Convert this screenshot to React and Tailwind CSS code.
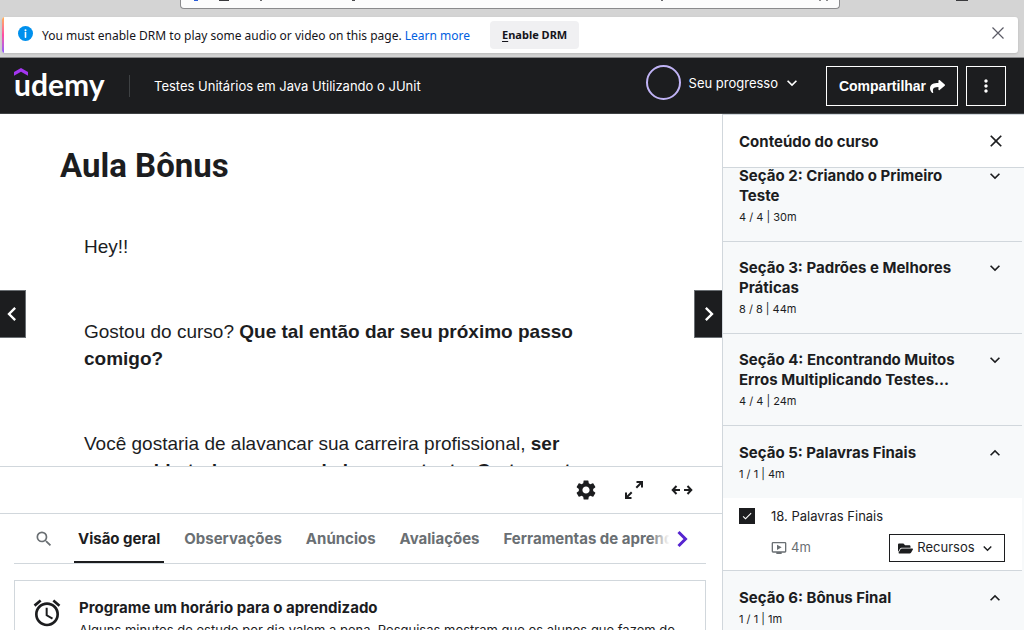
import {
  MdAccessAlarm,
  MdCheck,
  MdChevronLeft,
  MdChevronRight,
  MdClose,
  MdExpandLess,
  MdExpandMore,
  MdMoreVert,
  MdOndemandVideo,
  MdSearch,
  MdSettings,
} from 'react-icons/md';
import { FaFolderOpen, FaShare } from 'react-icons/fa';

const tabs = ['Visão geral', 'Observações', 'Anúncios', 'Avaliações', 'Ferramentas de aprendizado'];

function BrowserChrome() {
  return (
    <div className="bg-[#d4d4d4] pr-[6px] pb-[4px] pl-[2px] font-['Noto_Sans',sans-serif]">
      <div className="flex h-[17px] items-start pl-[178px]">
        <div className="h-[9px] w-[660px] rounded-b-[4px] border border-t-0 border-[#8a8a8c] bg-[#fcfcfc]">
          <svg className="block" width="658" height="2" aria-hidden="true">
            <rect x="13" width="4" height="1" fill="#2a5bd7" />
            <rect x="38" width="10" height="1" fill="#3a3a3d" />
            <rect x="79" width="2" height="1" fill="#6b6b6e" />
            <rect x="171" width="3" height="1" fill="#4a4a4d" />
            <rect x="480" width="2" height="1" fill="#6b6b6e" />
            <rect x="638" width="2" height="1" fill="#8a8a8c" />
            <rect x="645" width="2" height="1" fill="#8a8a8c" />
          </svg>
        </div>
        <span className="ml-[116px] h-px w-3 bg-[#3a3a3d]" />
      </div>
      <div className="flex h-9 items-center overflow-hidden rounded-[3px] bg-white shadow-sm">
        <span className="h-full w-[2px] bg-linear-to-b from-[#ffb04f] via-[#ff4aa2] to-[#9059ff]" />
        <svg className="mb-1 ml-[14px]" width="15" height="15" viewBox="0 0 15 15" aria-hidden="true">
          <circle cx="7.500" cy="7.500" r="7.500" fill="#0090ed" />
          <circle cx="7.500" cy="4.200" r="1" fill="#fff" />
          <path d="M7.500 6.600v4.600" stroke="#fff" strokeWidth="1.600" strokeLinecap="round" />
        </svg>
        <p className="ml-[9px] pt-[2px] text-[12px] text-[#15141a]">
          You must enable DRM to play some audio or video on this page.{' '}
          <a href="#drm" className="text-[#0060df]">Learn more</a>
        </p>
        <button className="ml-5 h-7 rounded-[4px] bg-[#f0f0f2] px-3 text-[11px] font-bold text-[#15141a]">
          <span className="underline underline-offset-2">E</span>nable DRM
        </button>
        <button aria-label="Fechar aviso" className="mr-[14px] mb-1 ml-auto">
          <svg width="12" height="12" viewBox="0 0 12 12" stroke="#5b5b66" strokeWidth="1.200">
            <path d="M.5.5l11 11M11.500.5l-11 11" />
          </svg>
        </button>
      </div>
    </div>
  );
}

function Logo() {
  return (
    <a href="#inicio" className="relative mb-1 block w-[91px] font-['Lato',sans-serif] text-[30px] leading-[40px] font-bold text-white">
      udemy
      <svg className="absolute top-1 left-0" width="14" height="8" viewBox="0 0 14 8" fill="#a435f0" aria-hidden="true">
        <path d="M7 0l7 4v3.700L7 3.700 0 7.700V4z" />
      </svg>
    </a>
  );
}

function Header() {
  return (
    <header className="flex h-[57px] shrink-0 items-center border-t border-b border-t-[#8a8a8c] border-b-[#3e4143] bg-[#1c1d1f] pr-[18px] pl-[14px] text-white">
      <Logo />
      <span className="ml-6 h-[22px] w-px bg-[#3e4143]" />
      <a href="#curso" className="ml-6 pt-[2px] text-[13px]">Testes Unitários em Java Utilizando o JUnit</a>
      <button className="mb-[6px] ml-auto flex items-center text-[13px]">
        <span className="size-[35px] rounded-full border-2 border-[#c0b3f5]" />
        <span className="ml-2 pt-[2px]">Seu progresso</span>
        <MdExpandMore className="ml-1" size={20} />
      </button>
      <button className="ml-6 flex h-10 w-[132px] items-center justify-center gap-1 border border-white pt-[2px] font-['Liberation_Sans',sans-serif] text-[14px] font-bold">
        Compartilhar <FaShare size={15} />
      </button>
      <button aria-label="Mais opções" className="ml-2 flex size-10 items-center justify-center border border-white">
        <MdMoreVert size={20} />
      </button>
    </header>
  );
}

function Lesson() {
  return (
    <div className="relative min-h-0 flex-1">
      <article className="h-full overflow-hidden pt-8 pl-[60px]">
        <h1 className="font-['Roboto',sans-serif] text-[33px] leading-10 font-bold">Aula Bônus</h1>
        <div className="mt-[47px] ml-6 flex max-w-[530px] flex-col gap-[58px] font-['Liberation_Sans',sans-serif] text-[19px] leading-[27px]">
          <p>Hey!!</p>
          <p>Gostou do curso? <strong>Que tal então dar seu próximo passo comigo?</strong></p>
          <p>
            Você gostaria de alavancar sua carreira profissional,{' '}
            <strong>ser promovido todo ano, e mais bem contente. Certamente</strong>
          </p>
        </div>
      </article>
      <button aria-label="Aula anterior" className="absolute top-1/2 left-0 flex h-12 w-[26px] items-center justify-center border border-l-0 border-[#6a6f73] bg-[#1c1d1f] pr-[2px] text-white">
        <MdChevronLeft className="shrink-0" size={28} />
      </button>
      <button aria-label="Próxima aula" className="absolute top-1/2 right-0 flex h-12 w-7 items-center justify-center border border-r-0 border-[#6a6f73] bg-[#1c1d1f] text-white">
        <MdChevronRight className="shrink-0" size={28} />
      </button>
    </div>
  );
}

function Toolbar() {
  return (
    <div className="flex h-12 shrink-0 items-center justify-end gap-6 border-y border-[#d1d7dc] pr-7">
      <button aria-label="Configurações"><MdSettings size={24} /></button>
      <button aria-label="Tela cheia">
        <svg width="24" height="24" viewBox="0 0 24 24" fill="none" stroke="currentColor" strokeWidth="2">
          <path d="M14.500 4H20v5.500M20 4l-5.700 5.700M9.500 20H4v-5.500M4 20l5.700-5.700" />
        </svg>
      </button>
      <button aria-label="Visualização expandida">
        <svg width="24" height="24" viewBox="0 0 24 24" fill="none" stroke="currentColor" strokeWidth="2">
          <path d="M6.500 8L2.700 12l3.800 4M3 12h7M17.500 8l3.800 4-3.800 4M21 12h-7" />
        </svg>
      </button>
    </div>
  );
}

function Dashboard() {
  return (
    <section className="basis-[116px] overflow-hidden pr-4 pl-[14px]">
      <div className="relative flex h-[50px] border-b border-[#d1d7dc]">
        <button aria-label="Pesquisar" className="ml-5 flex w-10 items-center text-[#6a6f73]">
          <MdSearch size={20} />
        </button>
        <nav className="flex min-w-0 flex-1 gap-4 overflow-hidden">
          {tabs.map((tab, i) => (
            <button
              key={tab}
              className={
                i === 0
                  ? 'shrink-0 border-b-2 border-[#1c1d1f] px-1 pt-1 text-[15px] font-bold whitespace-nowrap'
                  : 'shrink-0 border-b-2 border-transparent px-1 pt-1 text-[15px] font-bold whitespace-nowrap text-[#6a6f73]'
              }
            >
              {tab}
            </button>
          ))}
        </nav>
        <button aria-label="Próximas abas" className="absolute inset-y-0 right-0 flex w-14 items-center justify-end bg-linear-to-r from-transparent via-white via-35% to-white pr-3 text-[#5624d0]">
          <svg width="24" height="24" viewBox="0 0 24 24" fill="none" stroke="currentColor" strokeWidth="3">
            <path d="M8.500 5l7 7-7 7" />
          </svg>
        </button>
      </div>
      <div className="mt-4 flex gap-4 border border-[#d1d7dc] py-4 pr-5 pl-4">
        <MdAccessAlarm className="shrink-0" size={32} />
        <div>
          <h2 className="text-[15px] leading-[22px] font-bold">Programe um horário para o aprendizado</h2>
          <p className="text-[13px] leading-[22px]">
            Alguns minutos de estudo por dia valem a pena. Pesquisas mostram que os alunos que fazem do
          </p>
        </div>
      </div>
    </section>
  );
}

function Section({ title, meta, open = false, children }) {
  return (
    <li className="border-b border-[#d1d7dc] bg-[#f7f9fa]">
      <button
        className={
          open
            ? 'flex w-full items-start justify-between pt-[17px] pr-[17px] pb-[15px] pl-4 text-left'
            : 'flex w-full items-start justify-between pt-4 pr-[17px] pb-[15px] pl-4 text-left'
        }
      >
        <span className="w-[226px]">
          <span className="block text-[15px] leading-5 font-bold">{title}</span>
          <span className="mt-[2px] block text-[11px] leading-[18px]">{meta}</span>
        </span>
        {open ? <MdExpandLess size={20} /> : <MdExpandMore size={20} />}
      </button>
      {children}
    </li>
  );
}

function Sidebar() {
  return (
    <aside className="flex w-[302px] shrink-0 flex-col border-l border-[#d1d7dc] bg-[#f7f9fa]">
      <div className="z-10 flex h-[54px] shrink-0 items-center justify-between border-y border-[#d1d7dc] bg-white pr-[18px] pl-4">
        <h2 className="pt-[2px] text-[15px] font-bold">Conteúdo do curso</h2>
        <button aria-label="Fechar conteúdo"><MdClose size={20} /></button>
      </div>
      <div className="min-h-0 flex-1 overflow-hidden pr-[2px]">
        <ul className="-mt-[18px]">
          <Section title="Seção 2: Criando o Primeiro Teste" meta="4 / 4 | 30m" />
          <Section title="Seção 3: Padrões e Melhores Práticas" meta="8 / 8 | 44m" />
          <Section title="Seção 4: Encontrando Muitos Erros Multiplicando Testes…" meta="4 / 4 | 24m" />
          <Section title="Seção 5: Palavras Finais" meta="1 / 1 | 4m" open>
            <div className="flex gap-4 bg-white py-2 pr-[17px] pl-4">
              <span className="relative mt-[2px] size-4 shrink-0">
                <input id="aula-18" type="checkbox" defaultChecked className="block size-4 appearance-none bg-[#1c1d1f]" />
                <MdCheck className="pointer-events-none absolute top-[2px] left-[2px] text-white" size={12} />
              </span>
              <div className="flex-1 text-[13px]">
                <label htmlFor="aula-18" className="block leading-5">18. Palavras Finais</label>
                <div className="mt-2 flex items-center justify-between">
                  <span className="flex items-center gap-1 text-[#6a6f73]">
                    <MdOndemandVideo size={16} /> 4m
                  </span>
                  <button className="flex h-7 w-[116px] items-center justify-center gap-1 border border-[#1c1d1f]">
                    <FaFolderOpen size={15} /> Recursos <MdExpandMore size={17} />
                  </button>
                </div>
              </div>
            </div>
          </Section>
          <Section title="Seção 6: Bônus Final" meta="1 / 1 | 1m" open />
        </ul>
      </div>
    </aside>
  );
}

export default function App() {
  return (
    <div className="flex h-screen flex-col overflow-hidden bg-white font-['Inter',sans-serif] text-[#1c1d1f]">
      <BrowserChrome />
      <Header />
      <div className="flex min-h-0 flex-1">
        <main className="flex min-w-0 flex-1 flex-col">
          <Lesson />
          <Toolbar />
          <Dashboard />
        </main>
        <Sidebar />
      </div>
    </div>
  );
}
